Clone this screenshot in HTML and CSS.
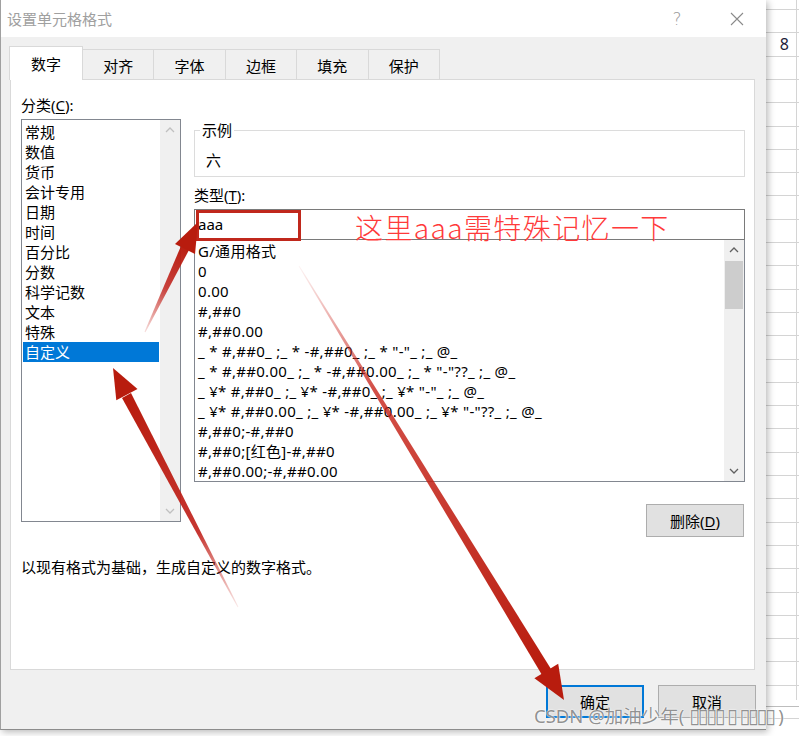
FILE: index.html
```html
<!DOCTYPE html>
<html>
<head>
<meta charset="utf-8">
<title>设置单元格格式</title>
<link rel="stylesheet" href="styles.css">
</head>
<body>
<div id=screen>

<div id=dlg>
 <div class=titlebar>
  <span class=title>设置单元格格式</span>
  <span class=help>?</span>
  <svg class=close width=14 height=14 viewBox="0 0 14 14"><path d="M1 1L13 13M13 1L1 13" stroke="#8a8a8a" stroke-width="1.1" fill="none"/></svg>
 </div>

 <div class=tabs>
  <span class="tab on">数字</span>
  <span class=tab>对齐</span>
  <span class=tab>字体</span>
  <span class=tab>边框</span>
  <span class=tab>填充</span>
  <span class=tab>保护</span>
 </div>

 <div class=panel>
  <div class=cols>
   <div class=left>
    <div class=lbl>分类(<u>C</u>):</div>
    <div class="list cat">
     <div class=items>
      <div>常规</div>
      <div>数值</div>
      <div>货币</div>
      <div>会计专用</div>
      <div>日期</div>
      <div>时间</div>
      <div>百分比</div>
      <div>分数</div>
      <div>科学记数</div>
      <div>文本</div>
      <div>特殊</div>
      <div class=sel>自定义</div>
     </div>
     <div class="sbar off">
      <div class=btn><svg width=10 height=6 viewBox="0 0 10 6"><polyline points="1,5 5,1 9,5"/></svg></div>
      <div class=track></div>
      <div class=btn><svg width=10 height=6 viewBox="0 0 10 6"><polyline points="1,1 5,5 9,1"/></svg></div>
     </div>
    </div>
   </div>

   <div class=right>
    <fieldset class=sample>
     <legend>示例</legend>
     <div class=val>六</div>
    </fieldset>
    <div class="lbl t">类型(<u>T</u>):</div>
    <div class=typebox>aaa<span class=mark></span><span class=note>这里aaa需特殊记忆一下</span></div>
    <div class="list fmt">
     <div class=items>
      <div>G/通用格式</div>
      <div>0</div>
      <div>0.00</div>
      <div>#,##0</div>
      <div>#,##0.00</div>
      <div>_ * #,##0_ ;_ * -#,##0_ ;_ * "-"_ ;_ @_</div>
      <div>_ * #,##0.00_ ;_ * -#,##0.00_ ;_ * "-"??_ ;_ @_</div>
      <div>_ ¥* #,##0_ ;_ ¥* -#,##0_ ;_ ¥* "-"_ ;_ @_</div>
      <div>_ ¥* #,##0.00_ ;_ ¥* -#,##0.00_ ;_ ¥* "-"??_ ;_ @_</div>
      <div>#,##0;-#,##0</div>
      <div>#,##0;[红色]-#,##0</div>
      <div>#,##0.00;-#,##0.00</div>
     </div>
     <div class=sbar>
      <div class=btn><svg width=10 height=6 viewBox="0 0 10 6"><polyline points="1,5 5,1 9,5"/></svg></div>
      <div class=track><div class=thumb></div></div>
      <div class=btn><svg width=10 height=6 viewBox="0 0 10 6"><polyline points="1,1 5,5 9,1"/></svg></div>
     </div>
    </div>
    <div class=delrow><button class=btn2>删除(<u>D</u>)</button></div>
   </div>
  </div>
  <p class=desc>以现有格式为基础，生成自定义的数字格式。</p>
 </div>

 <div class=foot>
  <button class="btn2 def">确定</button>
  <button class=btn2>取消</button>
 </div>
</div>

<div id=sheet>
 <div class=cell>8</div>
</div>

<svg id=arrows width=799 height=736 viewBox="0 0 799 736">
 <defs>
  <linearGradient id=g1 gradientUnits=userSpaceOnUse x1=145 y1=332 x2=190 y2=245>
   <stop offset=0 stop-color="#c8241a" stop-opacity=".15"/>
   <stop offset=.5 stop-color="#c0201a" stop-opacity=".85"/>
   <stop offset=1 stop-color="#b81c0e"/>
  </linearGradient>
  <linearGradient id=g2 gradientUnits=userSpaceOnUse x1=238 y1=607 x2=127 y2=395>
   <stop offset=0 stop-color="#c8241a" stop-opacity=".1"/>
   <stop offset=.35 stop-color="#c0201a" stop-opacity=".9"/>
   <stop offset=1 stop-color="#b81c0e"/>
  </linearGradient>
  <linearGradient id=g3 gradientUnits=userSpaceOnUse x1=299 y1=266 x2=546 y2=671>
   <stop offset=0 stop-color="#d0302a" stop-opacity=".05"/>
   <stop offset=.3 stop-color="#c8241a" stop-opacity=".8"/>
   <stop offset=1 stop-color="#b81c0e"/>
  </linearGradient>
 </defs>
 <polygon fill="url(#g1)" points="145.5,332.2 144.5,331.8 181,246 189,250"/>
 <polygon fill="#b81c0e" points="198,222 195,254 175,244"/>
 <polygon fill="url(#g2)" points="238.4,606.8 237.6,607.2 122,398 131,393"/>
 <polygon fill="#b81c0e" points="113,368 137.5,389 116.3,400.2"/>
 <polygon fill="url(#g3)" points="299.4,265.7 298.6,266.3 542,675 551,669"/>
 <polygon fill="#b81c0e" points="564,700 558.2,663.7 534.4,678.3"/>
</svg>

<div class=wm>CSDN @加油少年( <span class=tofu>▯▯▯▯ ▯ ▯▯▯▯</span> )</div>

</div>
</body>
</html>
```

FILE: styles.css
```css
body {
 margin:0;
 background:#fff;
 font-family:"Noto Sans", "Noto Sans CJK SC", sans-serif;
 font-size:15px;
 color:#000;
}
#screen {
 position:relative;
 display:flex;
 width:799px;
 height:736px;
 overflow:hidden;
}

/* dialog */
#dlg {
 position:relative;
 z-index:1;
 flex:none;
 display:flex;
 flex-direction:column;
 width:765px;
 height:729px;
 background:#f0f0f0;
 border-left:1px solid #a0a0a0;
 border-bottom:1px solid #8c8c8c;
 box-shadow:2px 2px 7px rgba(0,0,0,0.28);
}
.titlebar {
 display:flex;
 align-items:center;
 height:37px;
 padding-left:6px;
 background:#fff;
 color:#a0a0a0;
 line-height:20px;
}
.title {font-family:"Noto Sans CJK SC", sans-serif;}
.help {
 margin-left:auto;
 width:20px;
 text-align:center;
 font-size:17px;
 font-family:"DejaVu Sans", sans-serif;
 font-weight:200;
 color:#9a9a9a;
}
.close {margin:0 22px 0 43px;}

.tabs {
 display:flex;
 align-items:flex-end;
 height:32px;
 margin-top:10px;
 padding-left:8px;
}
.tab {
 display:flex;
 align-items:center;
 justify-content:center;
 box-sizing:border-box;
 width:71.4px;
 height:30px;
 padding-top:2px;
 background:#f0f0f0;
 border-top:1px solid #d9d9d9;
 border-right:1px solid #d9d9d9;
 font-family:"Noto Sans CJK SC", sans-serif;
}
.tab.on {
 position:relative;
 z-index:1;
 width:74px;
 height:34px;
 margin-bottom:-1px;
 padding-top:0;
 background:#fff;
 border-left:1px solid #d9d9d9;
}

.panel {
 box-sizing:border-box;
 height:591px;
 margin:0 11px 0 9px;
 padding:15px 9px 0 10px;
 background:#fff;
 border:1px solid #d9d9d9;
}
.cols {
 display:grid;
 grid-template-columns:160px 1fr;
 column-gap:13px;
 align-items:start;
}
.lbl {line-height:20px; height:20px;}
.lbl u, .btn2 u {text-underline-offset:2px;}

.list {
 display:flex;
 box-sizing:border-box;
 border:1px solid #828790;
 background:#fff;
}
.cat {height:403px; margin-top:4px;}
.items {flex:1; min-width:0; padding:2px 1px 0;}
.items div {
 height:20px;
 line-height:20px;
 padding-left:2px;
 white-space:pre;
}
.sel {background:#0078d7; color:#fff;}
.sbar {
 display:flex;
 flex-direction:column;
 flex:none;
 width:20px;
 background:#f0f0f0;
}
.sbar .btn {
 display:flex;
 align-items:center;
 justify-content:center;
 height:20px;
}
.sbar polyline {fill:none; stroke:#606060; stroke-width:1.3;}
.sbar.off polyline {stroke:#c0c0c0;}
.sbar .track {flex:1;}
.thumb {height:48px; margin:1px 1px 0; background:#cdcdcd;}

.sample {
 margin:25px 0 0;
 padding:0 6px 6px 5px;
 border:1px solid #dcdcdc;
 min-width:0;
}
.sample legend {
 padding:0 2px;
 line-height:20px;
 font-family:"Noto Sans CJK SC", sans-serif;
}
.sample .val {
 padding:10px 0 0 6px;
 line-height:20px;
}
.lbl.t {margin-top:8px;}
.typebox {
 position:relative;
 box-sizing:border-box;
 height:31px;
 margin-top:4px;
 padding-left:3px;
 border:1px solid #7a7a7a;
 line-height:29px;
}
.mark {
 position:absolute;
 left:1px;
 top:0;
 box-sizing:border-box;
 width:105px;
 height:31px;
 border:3px solid #c0281c;
}
.note {
 position:absolute;
 left:160px;
 top:1px;
 line-height:32px;
 font-size:28px;
 font-weight:300;
 letter-spacing:1.4px;
 color:#ff3a3a;
 font-family:"Noto Sans CJK SC", sans-serif;
 white-space:nowrap;
}
.fmt {height:243px; margin-top:-1px;}
.fmt .items {padding-top:1px;}
.fmt .items div {letter-spacing:0.3px;}

.delrow {display:flex; justify-content:flex-end; margin-top:22px;}
.btn2 {
 box-sizing:border-box;
 width:98px;
 height:33px;
 padding:0;
 background:#e1e1e1;
 border:1px solid #adadad;
 font:15px "Noto Sans", "Noto Sans CJK SC", sans-serif;
 color:#000;
}
.delrow .btn2 {margin-right:1px;}
.desc {margin:20px 0 0; line-height:20px;}

.foot {
 display:flex;
 justify-content:flex-end;
 gap:14px;
 padding:15px 10px 0 0;
}
.def {border:2px solid #0078d7;}

/* sheet behind the dialog */
#sheet {
 flex:1;
 background:
  linear-gradient(#d4d4d4, #d4d4d4) 30px 0/1px 700px no-repeat,
  repeating-linear-gradient(#d4d4d4 9px, #d4d4d4 10px, transparent 10px, transparent 32.3px) 0 0/100% 700px no-repeat,
  linear-gradient(#bdbdbd, #bdbdbd) 0 706px/100% 1px no-repeat,
  linear-gradient(#d4d4d4, #d4d4d4) 0 718px/100% 1px no-repeat;
}
.cell {
 width:23px;
 margin-top:34px;
 text-align:right;
 line-height:20px;
 font-size:16px;
 color:#1d1d3a;
}

/* overlays */
#arrows {position:absolute; left:0; top:0; z-index:2; pointer-events:none;}
.wm {
 position:absolute;
 z-index:3;
 left:534px;
 top:704px;
 font-size:18.5px;
 line-height:24px;
 color:rgba(125,125,125,0.85);
 text-shadow:0 0 2px #fff, 0 0 1px #fff;
 white-space:nowrap;
}
.tofu {font-family:"DejaVu Sans", sans-serif; font-size:20px; letter-spacing:-2.5px;}
```
